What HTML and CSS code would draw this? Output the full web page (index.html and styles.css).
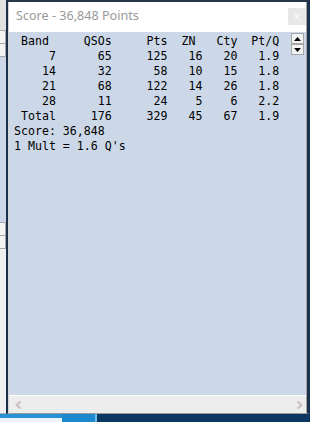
FILE: index.html
```html
<!DOCTYPE html>
<html lang="en">
<head>
    <meta charset="UTF-8">
    <title>Score</title>
    <link rel="stylesheet" href="styles.css">
</head>
<body>
    <div class="desktop">
        <div class="backdrop">
            <div class="strip-top"></div>
            <div class="cells"><div class="cell"></div><div class="cell"></div></div>
            <div class="strip-blue"></div>
            <div class="cells"><div class="cell"></div><div class="cell"></div></div>
            <div class="strip-gray"></div>
        </div>

        <div class="window">
            <div class="frame">
                <div class="titlebar">
                    <span class="title">Score - 36,848 Points</span>
                    <span class="close">×</span>
                </div>

                <div class="client">
<pre class="score"> Band     QSOs     Pts  ZN   Cty  Pt/Q
     7      65     125   16   20   1.9
    14      32      58   10   15   1.8
    21      68     122   14   26   1.8
    28      11      24    5    6   2.2
 Total     176     329   45   67   1.9
Score: 36,848
1 Mult = 1.6 Q's</pre>
                    <div class="vscroll">
                        <div class="sbtn">
                            <svg width="7" height="4" viewBox="0 0 7 4"><path d="M0 4 L3.5 0 L7 4 Z" fill="#000"/></svg>
                        </div>
                        <div class="sbtn">
                            <svg width="7" height="4" viewBox="0 0 7 4"><path d="M0 0 L3.5 4 L7 0 Z" fill="#000"/></svg>
                        </div>
                    </div>
                </div>

                <div class="hscroll">
                    <svg width="7" height="8" viewBox="0 0 7 8"><path d="M5.5 0.5 L1.5 4 L5.5 7.5" fill="none" stroke="#c9bfc0" stroke-width="2"/></svg>
                    <svg width="7" height="8" viewBox="0 0 7 8"><path d="M1.5 0.5 L5.5 4 L1.5 7.5" fill="none" stroke="#c9bfc0" stroke-width="2"/></svg>
                </div>
            </div>
        </div>
    </div>

    <div class="taskbar">
        <div class="tb-start"><div class="tb-blue"></div><div class="tb-white"></div></div>
        <div class="tb-mid"></div>
        <div class="tb-line"></div>
        <div class="tb-rest"></div>
    </div>
</body>
</html>
```

FILE: styles.css
```css
body {
    margin: 0;
    width: 310px;
    height: 422px;
    overflow: hidden;
    background-color: #0c3760;
}
.desktop {
    display: flex;
    height: 414px;
}
.backdrop {
    width: 6px;
    display: flex;
    flex-direction: column;
}
.strip-top {
    height: 30px;
    background-color: #e2e2e2;
}
.cells {
    display: flex;
    flex-direction: column;
    gap: 1px;
    background-color: #a9a9a9;
    padding: 1px 1px 1px 0;
}
.cell {
    height: 12px;
    background-color: #f4f4f4;
}
.strip-blue {
    height: 165px;
    background-color: #ccd8e8;
}
.strip-gray {
    flex: 1;
    background-color: #f0f0f0;
    border-bottom: 1px solid #b0b0b0;
}
.window {
    width: 299px;
    border-left: 2px solid #1b3049;
    border-top: 2px solid #27364a;
    border-right: 3px solid #1c3350;
    border-bottom: 1px solid #6d7c8c;
}
.frame {
    display: flex;
    flex-direction: column;
    height: 411px;
    border-left: 1px solid #d6d6d6;
    border-right: 1px solid #a4a4a4;
    border-bottom: 1px solid #9a9a9a;
}
.titlebar {
    height: 30px;
    background-color: #fff;
    display: flex;
    justify-content: space-between;
    align-items: flex-start;
}
.title {
    font-family: "Noto Sans", sans-serif;
    font-size: 12.6px;
    color: #9a9a9a;
    padding: 6px 0 0 7px;
    line-height: 16px;
}
.close {
    margin-top: 6px;
    width: 18px;
    height: 17px;
    background-color: #e8e8e8;
    color: #fbfbfb;
    font-family: "DejaVu Sans", sans-serif;
    font-size: 10px;
    line-height: 17px;
    text-align: center;
}
.client {
    flex: 1;
    display: flex;
    background-color: #ccd8e8;
}
.score {
    flex: 1;
    margin: 0;
    padding: 2px 0 0 5px;
    font-family: "DejaVu Sans Mono", monospace;
    font-size: 11.6px;
    line-height: 15px;
    color: #000;
}
.vscroll {
    width: 15px;
    padding-top: 1px;
    display: flex;
    flex-direction: column;
}
.sbtn {
    width: 11px;
    height: 9px;
    border: 1px solid #a6a6a6;
    background-color: #f3f3f3;
    display: flex;
    align-items: center;
    justify-content: center;
}
.hscroll {
    height: 17px;
    border-top: 1px solid #fff;
    background-color: #ededed;
    display: flex;
    justify-content: space-between;
    align-items: center;
    padding: 0 3px 0 6px;
}
.taskbar {
    display: flex;
    height: 8px;
}
.tb-start {
    width: 62px;
    display: flex;
    flex-direction: column;
}
.tb-blue {
    height: 4px;
    background-color: #2592d6;
}
.tb-white {
    flex: 1;
    background-color: #eef4fa;
}
.tb-mid {
    width: 33px;
    background-color: #1b88d0;
}
.tb-line {
    width: 2px;
    background-color: #6cc0ec;
}
.tb-rest {
    flex: 1;
    background-color: #0c3760;
}
```
